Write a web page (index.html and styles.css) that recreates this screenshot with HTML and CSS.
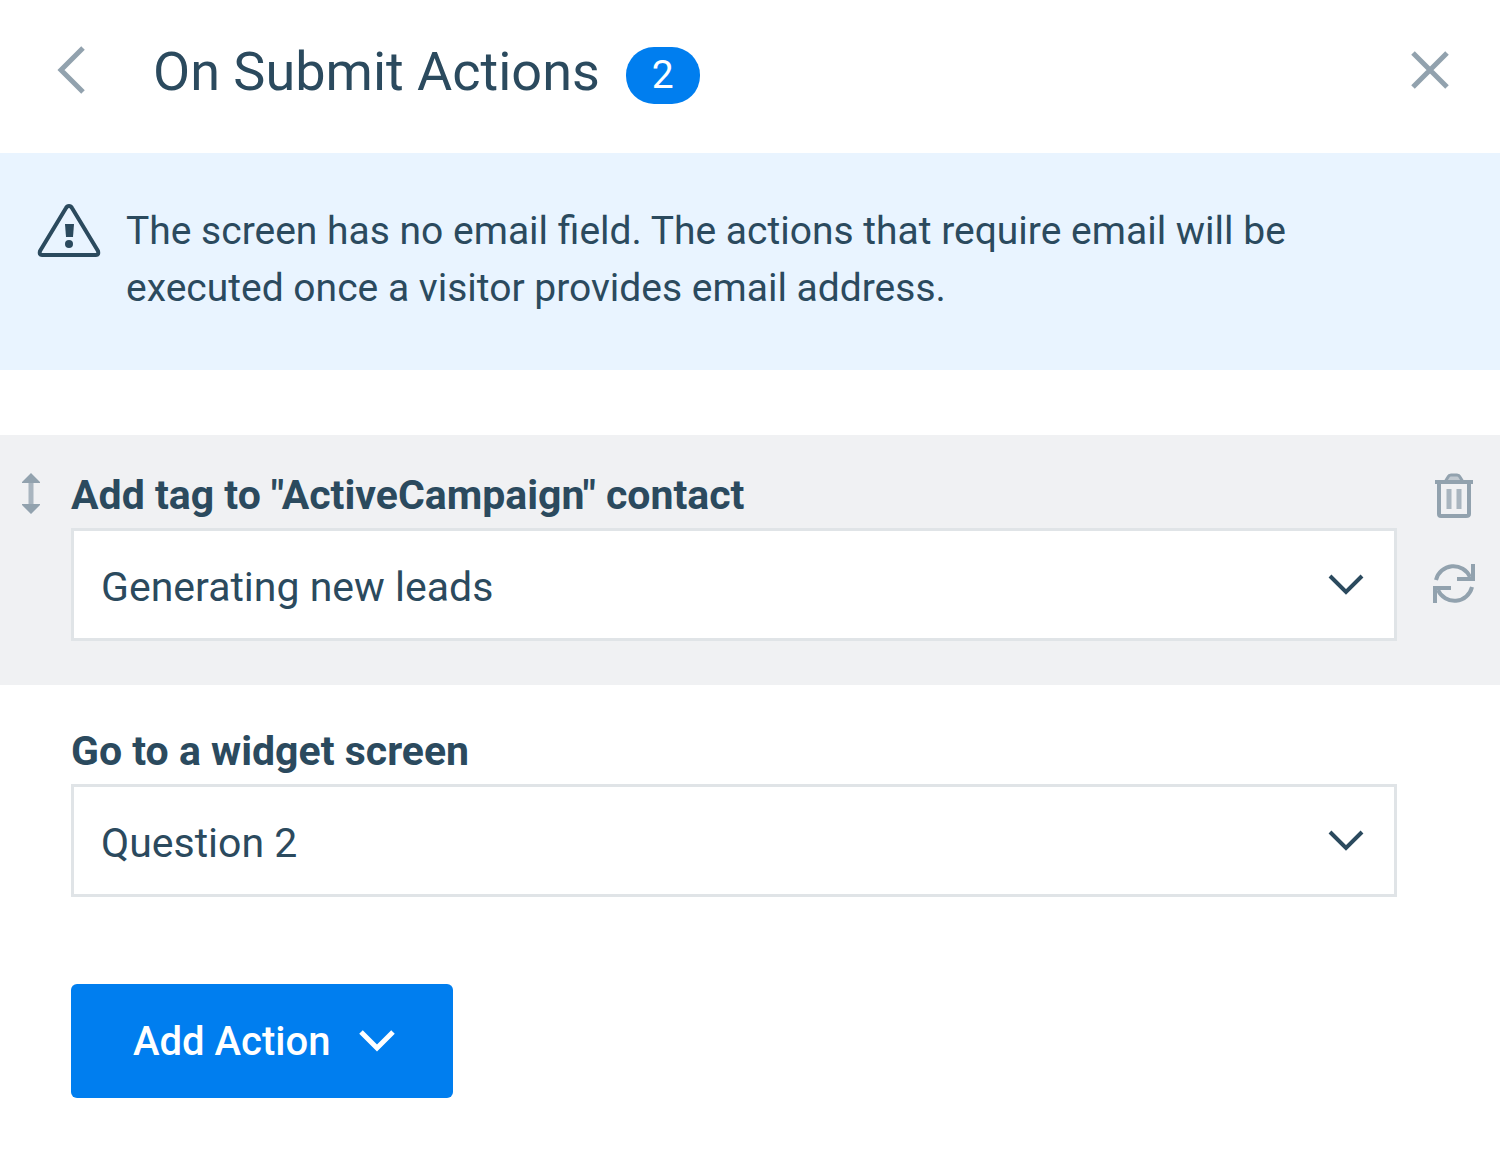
FILE: index.html
```html
<!DOCTYPE html>
<html lang="en">
<head>
    <meta charset="UTF-8">
    <meta name="viewport" content="width=device-width, initial-scale=1.0">
    <title>On Submit Actions</title>
    <link rel="stylesheet" href="styles.css">
</head>
<body>
    <header class="panel-header">
        <button class="icon-button" type="button" aria-label="Back">
            <svg width="30" height="50" viewBox="0 0 30 50"><path d="M27 3L5 25l22 22" fill="none" stroke="currentColor" stroke-width="5"/></svg>
        </button>
        <h1 class="panel-title">On Submit Actions</h1>
        <span class="badge">2</span>
        <button class="icon-button close-button" type="button" aria-label="Close">
            <svg width="40" height="40" viewBox="0 0 40 40"><path d="M3 3l34 34M37 3L3 37" fill="none" stroke="currentColor" stroke-width="5"/></svg>
        </button>
    </header>

    <div class="notice">
        <svg class="notice-icon" width="64" height="56" viewBox="0 0 64 56">
            <path d="M32 3q2 0 3 2l26 43q1 4-2 4H5q-3 0-2-4L29 5q1-2 3-2z" fill="none" stroke="currentColor" stroke-width="4" stroke-linejoin="round"/>
            <path d="M28 21h9l-1 13h-7z" fill="currentColor"/>
            <circle cx="32" cy="41" r="4" fill="currentColor"/>
        </svg>
        <p class="notice-text">The screen has no email field. The actions that require email will be executed once a visitor provides email address.</p>
    </div>

    <main class="actions">
        <div class="action active">
            <div class="action-drag">
                <svg width="20" height="42" viewBox="0 0 20 42">
                    <path d="M11 6v30" stroke="currentColor" stroke-width="5" opacity="0.75"/>
                    <path d="M11 0l9 9v1H2V9zM11 41l9-9v-1H2v1z" fill="currentColor"/>
                </svg>
            </div>
            <div class="action-field">
                <label for="tag">Add tag to "ActiveCampaign" contact</label>
                <div class="select-box">
                    <select id="tag">
                        <option>Generating new leads</option>
                    </select>
                    <svg class="chevron" width="36" height="22" viewBox="0 0 36 22"><path d="M2 2l16 16L34 2" fill="none" stroke="currentColor" stroke-width="4"/></svg>
                </div>
            </div>
            <div class="action-tools">
                <button class="icon-button" type="button" aria-label="Delete">
                    <svg width="42" height="46" viewBox="0 0 42 46">
                        <path d="M12 9l3-5q1-2 3-2h6q2 0 3 2l3 5z" fill="currentColor" fill-opacity="0.5" stroke="currentColor" stroke-width="3"/>
                        <path d="M2 9h38" stroke="currentColor" stroke-width="4"/>
                        <path d="M6 9v32q0 2 2 2h25q3 0 3-2V9" fill="none" stroke="currentColor" stroke-width="4"/>
                        <path d="M16 16v20M26 16v20" stroke="currentColor" stroke-width="5" opacity="0.75"/>
                    </svg>
                </button>
                <button class="icon-button" type="button" aria-label="Refresh">
                    <svg width="42" height="42" viewBox="0 0 42 42" fill="none" stroke="currentColor" stroke-width="4">
                        <path d="M3 17A18 18 0 0 1 37 14M40 1v15H24"/>
                        <path d="M39 24A18 18 0 0 1 5 27M2 40V25h16"/>
                    </svg>
                </button>
            </div>
        </div>

        <div class="action">
            <div class="action-drag"></div>
            <div class="action-field">
                <label for="screen">Go to a widget screen</label>
                <div class="select-box">
                    <select id="screen">
                        <option>Question 2</option>
                    </select>
                    <svg class="chevron" width="36" height="22" viewBox="0 0 36 22"><path d="M2 2l16 16L34 2" fill="none" stroke="currentColor" stroke-width="4"/></svg>
                </div>
            </div>
            <div class="action-tools"></div>
        </div>

        <button class="add-button" type="button">
            Add Action
            <svg width="36" height="22" viewBox="0 0 36 22"><path d="M2 2l16 16L34 2" fill="none" stroke="currentColor" stroke-width="5"/></svg>
        </button>
    </main>
</body>
</html>
```

FILE: styles.css
```css
* {
    box-sizing: border-box;
}
body {
    margin: 0;
    background-color: #fff;
    color: #2b4a5e;
    font-family: Roboto, sans-serif;
    font-size: 41px;
}
svg {
    display: block;
}
.icon-button {
    padding: 0;
    border: none;
    background: none;
    color: #92a2ae;
    cursor: pointer;
}

/* Header */
.panel-header {
    display: flex;
    align-items: center;
    padding: 40px 50px 49px 56px;
}
.panel-header .icon-button {
    margin-bottom: 4px;
}
.panel-title {
    margin: 0 26px 0 67px;
    font-size: 54px;
    font-weight: 400;
    line-height: 64px;
}
.badge {
    padding: 0 26px;
    margin-top: 6px;
    border-radius: 28px;
    background-color: #007eef;
    color: #fff;
    font-size: 39px;
    line-height: 57px;
}
.close-button {
    margin-left: auto;
}

/* Notice */
.notice {
    display: flex;
    align-items: flex-start;
    gap: 25px;
    padding: 50px 160px 53px 37px;
    background-color: #e9f4ff;
}
.notice-icon {
    flex-shrink: 0;
}
.notice-text {
    margin: 0;
    font-size: 39px;
    line-height: 57px;
}

/* Actions */
.actions {
    padding-top: 65px;
}
.action {
    display: flex;
    margin-bottom: 6px;
    padding: 36px 25px 44px 0;
}
.action.active {
    background-color: #f0f1f3;
}
.action-drag {
    flex: 0 0 71px;
    padding: 2px 0 0 20px;
    color: #92a2ae;
}
.action-field {
    flex: 1;
}
.action-field label {
    display: block;
    margin-bottom: 9px;
    font-weight: 700;
    line-height: 48px;
}
.select-box {
    position: relative;
}
.select-box select {
    display: block;
    width: 100%;
    height: 113px;
    padding: 4px 80px 0 27px;
    border: 3px solid #e0e4e7;
    border-radius: 0;
    background-color: #fff;
    color: inherit;
    font: inherit;
    appearance: none;
}
.chevron {
    position: absolute;
    top: 46px;
    right: 33px;
    pointer-events: none;
}
.action-tools {
    display: flex;
    flex-direction: column;
    align-items: flex-end;
    gap: 44px;
    width: 78px;
    padding-top: 2px;
}
.add-button {
    display: flex;
    align-items: center;
    gap: 29px;
    height: 114px;
    margin: 43px 0 64px 71px;
    padding: 0 58px 0 62px;
    border: none;
    border-radius: 6px;
    background-color: #007eef;
    color: #fff;
    font: inherit;
    font-size: 40px;
    font-weight: 500;
    cursor: pointer;
}
```
